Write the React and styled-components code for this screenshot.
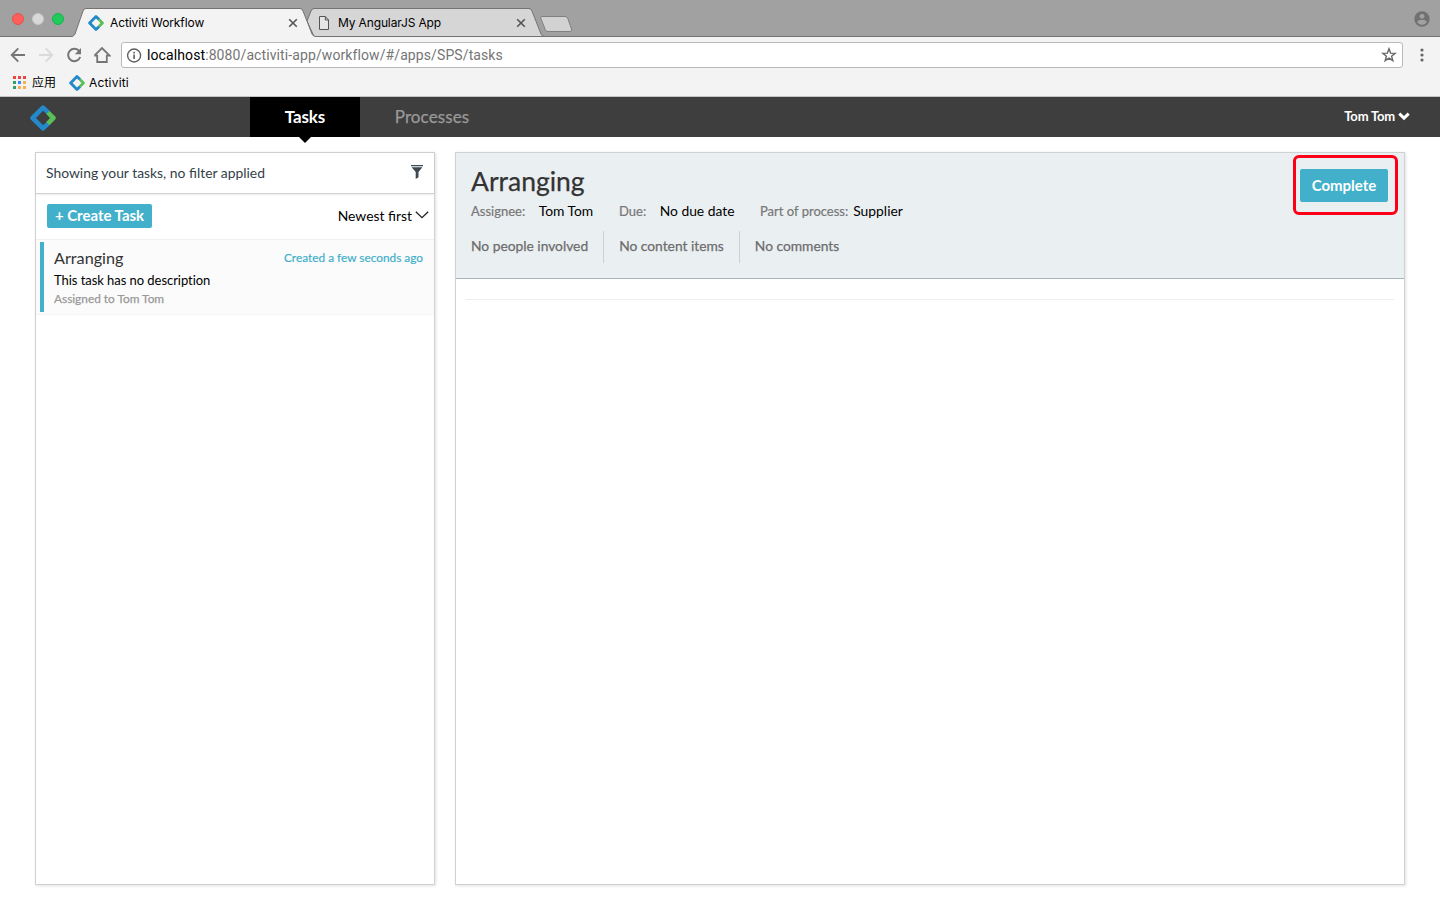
import React from 'react';
import styled, { createGlobalStyle } from 'styled-components';

const Global = createGlobalStyle`
  * { box-sizing: border-box; }
  html, body { margin: 0; padding: 0; background: #fff; }
  body { font-family: Lato, "Noto Sans CJK SC", sans-serif; overflow: hidden; }
  svg { display: block; flex: none; }
`;

const Window = styled.div`
  width: 1440px;
  height: 900px;
  display: flex;
  flex-direction: column;
  overflow: hidden;
  background: #fff;
`;

/* browser chrome */
const TabStrip = styled.div`
  height: 37px;
  flex: none;
  display: flex;
  align-items: flex-end;
  background: #a1a1a1;
  box-shadow: inset 0 -1px #737373;
  font-family: Inter, "Liberation Sans", sans-serif;
`;
const Lights = styled.div`
  display: flex;
  gap: 8px;
  width: 72px;
  height: 37px;
  padding: 13px 0 0 12px;
`;
const Light = styled.span`
  width: 12px;
  height: 12px;
  border-radius: 50%;
  background: ${p => p.$fill};
  border: 1px solid ${p => p.$edge};
`;
const Tab = styled.div`
  position: relative;
  z-index: ${p => (p.$active ? 2 : 1)};
  width: ${p => p.$width}px;
  height: 29px;
  margin-left: ${p => p.$overlap || 0}px;
  padding: 0 ${p => p.$right}px 0 ${p => p.$left}px;
  display: flex;
  align-items: center;
`;
const TabShape = styled.svg`
  position: absolute;
  left: 0;
  top: 0;
  z-index: -1;
`;
const TabTitle = styled.span`
  flex: 1;
  font-size: 12px;
  line-height: 28px;
  letter-spacing: ${p => p.$track}px;
  margin-left: ${p => p.$gap}px;
  color: #000;
  white-space: nowrap;
`;
const NewTab = styled.svg`
  margin: 0 0 4px -6px;
`;
const Profile = styled.svg`
  margin: 0 10px 10px auto;
`;
const Toolbar = styled.div`
  height: 35px;
  flex: none;
  display: flex;
  align-items: center;
  padding: 1px 10px 0 9px;
  background: #f3f3f3;
`;
const NavIcons = styled.div`
  display: flex;
  width: 112px;
  gap: 10px;
`;
const Address = styled.div`
  flex: 1;
  height: 26px;
  display: flex;
  align-items: center;
  padding: 0 5px 0 4px;
  background: #fff;
  border: 1px solid #b9b9b9;
  border-radius: 3px;
`;
const Url = styled.span`
  flex: 1;
  margin-left: 4px;
  font-family: Roboto, sans-serif;
  font-size: 14px;
  line-height: 24px;
  letter-spacing: 0.1px;
  color: #757575;
`;
const Host = styled.span`
  color: #000;
`;
const Menu = styled.svg`
  margin-left: 17px;
`;
const Bookmarks = styled.div`
  height: 25px;
  flex: none;
  display: flex;
  align-items: center;
  padding: 0 0 3px 12px;
  background: #f3f3f3;
  border-bottom: 1px solid #c4c4c4;
  font-family: Inter, "Noto Sans CJK SC", sans-serif;
  font-size: 12px;
`;
const Bookmark = styled.span`
  display: flex;
  align-items: center;
  gap: ${p => p.$gap}px;
  margin-right: 13px;
  line-height: 20px;
  letter-spacing: ${p => p.$track || 0}px;
  color: #000;
`;

/* application header */
const Header = styled.header`
  height: 40px;
  flex: none;
  display: flex;
  background: #3e3e3e;
`;
const Brand = styled.div`
  width: 250px;
  padding: 8px 0 0 30px;
`;
const NavItem = styled.div`
  position: relative;
  width: ${p => p.$width}px;
  text-align: center;
  font-size: 17px;
  line-height: 40px;
  font-weight: ${p => (p.$active ? 700 : 400)};
  letter-spacing: ${p => p.$track}px;
  color: ${p => (p.$active ? '#fff' : '#999')};
  -webkit-text-stroke: ${p => (p.$active ? 0 : 0.25)}px;
  background: ${p => (p.$active ? '#000' : 'transparent')};
`;
const Pointer = styled.span`
  position: absolute;
  left: 49px;
  top: 40px;
  border: 6px solid transparent;
  border-top-color: #000;
  border-bottom: 0;
`;
const User = styled.div`
  margin-left: auto;
  display: flex;
  align-items: center;
  gap: 3px;
  padding: 0 30px 2px 0;
  font-size: 13px;
  font-weight: 700;
  letter-spacing: -0.18px;
  color: #fff;
`;

/* content */
const Main = styled.main`
  flex: 1;
  display: flex;
  gap: 20px;
  padding: 15px 35px;
`;
const Panel = styled.section`
  width: ${p => p.$width}px;
  height: 733px;
  border: 1px solid #cfd1d3;
  box-shadow: 1px 1px 3px rgba(0, 0, 0, 0.12);
  background: #fff;
`;
const FilterBar = styled.div`
  height: 41px;
  display: flex;
  align-items: center;
  justify-content: space-between;
  padding: 0 11px 2px 10px;
  border-bottom: 1px solid #cfd1d3;
  box-shadow: 0 1px 2px rgba(0, 0, 0, 0.08);
  font-size: 13.88px;
  color: #333f48;
`;
const ListTools = styled.div`
  height: 45px;
  display: flex;
  align-items: center;
  justify-content: space-between;
  padding: 0 5px 2px 11px;
`;
const CreateButton = styled.button`
  width: 105px;
  height: 24px;
  padding: 0 0 1px;
  border: 0;
  border-radius: 2px;
  background: #42b0ca;
  color: #fff;
  font: 700 15px/23px Lato, sans-serif;
  letter-spacing: -0.02px;
  white-space: nowrap;
`;
const Sort = styled.div`
  display: flex;
  align-items: center;
  gap: 3px;
  font-size: 13.9px;
  color: #000;
`;
const Task = styled.article`
  height: 76px;
  display: flex;
  padding: 2px 11px 3px 4px;
  background: #fbfbfb;
  border-top: 1px solid #f0f0f0;
  border-bottom: 1px solid #f5f5f5;
`;
const TaskBody = styled.div`
  flex: 1;
  border-left: 4px solid #42b0ca;
  height: 70px;
  padding: 6px 0 0 10px;
`;
const TaskTop = styled.div`
  display: flex;
  justify-content: space-between;
  line-height: 20px;
`;
const TaskName = styled.span`
  font-size: 16.2px;
  color: #333;
`;
const Created = styled.span`
  font-size: 11.85px;
  color: #42b0ca;
  -webkit-text-stroke: 0.2px;
`;
const TaskText = styled.div`
  margin-top: 2px;
  font-size: 13px;
  line-height: 20px;
  letter-spacing: -0.05px;
  color: #000;
`;
const Assigned = styled.div`
  font-size: 11.85px;
  line-height: 17px;
  color: #999;
  -webkit-text-stroke: 0.25px;
`;
const Detail = styled.div`
  height: 126px;
  display: flex;
  justify-content: space-between;
  padding: 0 6px 0 15px;
  background: #eaeff2;
  border-bottom: 1px solid #aab4bf;
`;
const Title = styled.h1`
  margin: 10px 0 0;
  font-size: 26.5px;
  line-height: 36px;
  font-weight: 400;
  color: #333;
  -webkit-text-stroke: 0.25px;
`;
const Facts = styled.div`
  display: flex;
  margin-top: 2px;
  font-size: 13.85px;
  line-height: 20px;
  white-space: nowrap;
`;
const Fact = styled.div`
  width: ${p => p.$width}px;
  display: flex;
  gap: ${p => p.$gap}px;
  color: #000;
`;
const FactLabel = styled.span`
  font-size: 13px;
  color: #777;
  -webkit-text-stroke: 0.2px;
`;
const Counts = styled.div`
  display: flex;
  margin-top: 10px;
`;
const Count = styled.div`
  height: 32px;
  padding: 0 15px;
  line-height: 29px;
  font-size: 13.8px;
  color: #6d6d6d;
  -webkit-text-stroke: 0.25px;
  border-right: 1px solid #cdd1d4;
  white-space: nowrap;
  &:first-child { padding-left: 0; }
  &:last-child { border: 0; }
`;
const Highlight = styled.div`
  width: 105px;
  height: 60px;
  margin-top: 2px;
  border: 3px solid #fb0017;
  border-radius: 6px;
  padding: 11px 0 0 4px;
`;
const CompleteButton = styled.button`
  display: block;
  width: 88px;
  height: 33px;
  padding: 0;
  border: 0;
  border-radius: 2px;
  background: #42b0ca;
  color: #fff;
  font: 700 15px/33px Lato, sans-serif;
  letter-spacing: 0;
`;
const Rule = styled.hr`
  margin: 20px 10px 0;
  border: 0;
  border-top: 1px solid #eee;
`;

const Diamond = ({ size }) => (
  <svg width={size} height={size} viewBox="0 0 26 26" fill="none" strokeWidth="4.6" strokeLinejoin="round">
    <path d="M18.2 7.4 13 2.6 2.6 13 13 23.4l5.2-4.8" stroke="#2489cb" />
    <path d="M17.8 7.4 23.4 13l-5.6 5.6" stroke="#5bbf58" />
  </svg>
);
const Close = () => (
  <svg width="10" height="10" viewBox="0 0 10 10" stroke="#555" strokeWidth="1.6">
    <path d="m1.2 1.2 7.6 7.6M8.8 1.2 1.2 8.8" />
  </svg>
);
const appColors = ['#ef4444', '#ef4444', '#ef4444', '#34a065', '#2f8df5', '#f9b04a', '#34a065', '#f9b04a', '#f9b04a'];

export default function App() {
  return (
    <Window>
      <Global />
      <TabStrip>
        <Lights>
          <Light $fill="#fc605c" $edge="#e9504c" />
          <Light $fill="#d8d8d8" $edge="#c6c6c6" />
          <Light $fill="#22c95b" $edge="#14b548" />
        </Lights>
        <Tab $active $width={244} $left={16} $right={18}>
          <TabShape width="244" height="29">
            <path d="M0 28.5Q2 28 3 26L11 3Q12 .5 14 .5H228Q230 .5 231 3L240 26Q241 28.5 244 28.5V29H0Z" fill="#f3f3f3" />
            <path d="M0 28.5Q2 28 3 26L11 3Q12 .5 14 .5H228Q230 .5 231 3L240 26Q241 28.5 244 28.5" fill="none" stroke="#737373" />
          </TabShape>
          <Diamond size={16} />
          <TabTitle $gap={6} $track={-0.09}>Activiti Workflow</TabTitle>
          <Close />
        </Tab>
        <Tab $width={241} $left={15} $right={19} $overlap={-12}>
          <TabShape width="241" height="29">
            <path d="M3 13 7 3Q8 .5 10 .5H225Q227 .5 228 3L237 26Q238 28.5 241 28.5H10Z" fill="#d6d6d6" stroke="#737373" />
          </TabShape>
          <svg width="10" height="14" viewBox="0 0 10 14" fill="#e6e6e6" stroke="#555">
            <path d="M.5.5H6.3L9.5 4V13.5H.5ZM6.3.5V4H9.5" />
          </svg>
          <TabTitle $gap={9} $track={-0.14}>My AngularJS App</TabTitle>
          <Close />
        </Tab>
        <NewTab width="34" height="18">
          <path d="M3 1.5H26Q28 1.5 28.7 3.2L32.5 14Q33 16.5 31 16.5H9Q7 16.5 6.3 14.7L1.8 3.4Q1.3 1.5 3 1.5Z" fill="#d2d2d2" stroke="#808080" />
        </NewTab>
        <Profile width="16" height="16" viewBox="0 0 16 16">
          <circle cx="8" cy="8" r="7.7" fill="#717171" />
          <circle cx="8" cy="5.3" r="2.4" fill="#a1a1a1" />
          <path d="M3.2 11.2Q4.2 8.8 8 8.8t4.8 2.4Q11 13.7 8 13.7t-4.8-2.5Z" fill="#a1a1a1" />
        </Profile>
      </TabStrip>
      <Toolbar>
        <NavIcons>
          <svg width="18" height="18" viewBox="0 0 18 18" fill="none" stroke="#757575" strokeWidth="1.9"><path d="M16 9H3M9.3 2.4 2.7 9l6.6 6.6" /></svg>
          <svg width="18" height="18" viewBox="0 0 18 18" fill="none" stroke="#dadada" strokeWidth="1.9"><path d="M2 9h13M8.7 2.4 15.3 9l-6.6 6.6" /></svg>
          <svg width="18" height="18" viewBox="0 0 18 18" fill="none" stroke="#757575" strokeWidth="2"><path d="M14.3 5.2A6.2 6.2 0 1 0 15.2 11" /><path d="M16 2v6.2H9.8Z" fill="#757575" stroke="none" /></svg>
          <svg width="18" height="18" viewBox="0 0 18 18" fill="none" stroke="#757575" strokeWidth="1.8"><path d="M4.2 8.8v7.2h9.6V8.8M1.4 9.7 9 2l7.6 7.7H13.8M1.4 9.7H4.2" /></svg>
        </NavIcons>
        <Address>
          <svg width="17" height="17" viewBox="0 0 17 17" fill="none" stroke="#5f5f5f" strokeWidth="1.4"><circle cx="8.1" cy="8.5" r="6.5" /><path d="M8.1 7.5v4.4M8.1 4.8v1.6" strokeWidth="1.6" /></svg>
          <Url><Host>localhost</Host>:8080/activiti-app/workflow/#/apps/SPS/tasks</Url>
          <svg width="16" height="16" viewBox="0 0 16 16" fill="none" stroke="#666" strokeWidth="1.4"><path d="m8 1.8 1.6 4.3 4.6.2-3.6 2.9 1.2 4.4L8 11.1l-3.8 2.5 1.2-4.4-3.6-2.9 4.6-.2Z" /></svg>
        </Address>
        <Menu width="10" height="16" viewBox="0 0 10 16" fill="#666"><circle cx="2" cy="3" r="1.6" /><circle cx="2" cy="8" r="1.6" /><circle cx="2" cy="13" r="1.6" /></Menu>
      </Toolbar>
      <Bookmarks>
        <Bookmark $gap={6}>
          <svg width="14" height="14">
            {appColors.map((c, i) => <rect key={i} x={1 + (i % 3) * 5} y={Math.floor(i / 3) * 5} width="3" height="3" fill={c} />)}
          </svg>
          应用
        </Bookmark>
        <Bookmark $gap={4} $track={0.18}><Diamond size={16} />Activiti</Bookmark>
      </Bookmarks>
      <Header>
        <Brand><Diamond size={26} /></Brand>
        <NavItem $active $width={110} $track={-0.1}>Tasks<Pointer /></NavItem>
        <NavItem $width={144} $track={0.1}>Processes</NavItem>
        <User>
          Tom Tom
          <svg width="12" height="9" viewBox="0 0 12 9" fill="none" stroke="#fff" strokeWidth="3"><path d="m1.3 1.7 4.7 4.5 4.7-4.5" /></svg>
        </User>
      </Header>
      <Main>
        <Panel $width={400}>
          <FilterBar>
            <span>Showing your tasks, no filter applied</span>
            <svg width="12" height="14" viewBox="0 0 12 14" fill="#3d4851"><path d="M0 0h12v1.2H0ZM.6 2.2h10.8L7.5 7v5.2L4.7 14V7Z" /></svg>
          </FilterBar>
          <ListTools>
            <CreateButton>+ Create Task</CreateButton>
            <Sort>
              Newest first
              <svg width="14" height="9" viewBox="0 0 14 9" fill="none" stroke="#222" strokeWidth="1.3"><path d="m.8 .7 6.2 6 6.2-6" /></svg>
            </Sort>
          </ListTools>
          <Task>
            <TaskBody>
              <TaskTop><TaskName>Arranging</TaskName><Created>Created a few seconds ago</Created></TaskTop>
              <TaskText>This task has no description</TaskText>
              <Assigned>Assigned to Tom Tom</Assigned>
            </TaskBody>
          </Task>
        </Panel>
        <Panel $width={950}>
          <Detail>
            <div>
              <Title>Arranging</Title>
              <Facts>
                <Fact $width={148} $gap={13.5}><FactLabel>Assignee:</FactLabel>Tom Tom</Fact>
                <Fact $width={141} $gap={13.5}><FactLabel>Due:</FactLabel>No due date</Fact>
                <Fact $width={160} $gap={5}><FactLabel>Part of process:</FactLabel>Supplier</Fact>
              </Facts>
              <Counts>
                <Count>No people involved</Count>
                <Count>No content items</Count>
                <Count>No comments</Count>
              </Counts>
            </div>
            <Highlight><CompleteButton>Complete</CompleteButton></Highlight>
          </Detail>
          <Rule />
        </Panel>
      </Main>
    </Window>
  );
}
